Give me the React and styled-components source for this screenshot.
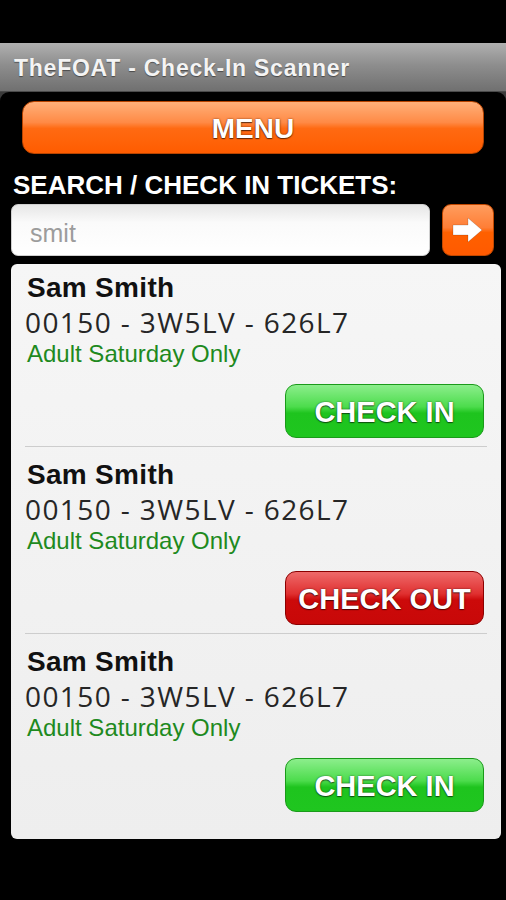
import React from "react";
import styled, { createGlobalStyle, css } from "styled-components";

const Global = createGlobalStyle`
  html, body { margin: 0; padding: 0; background: #000; }
  body { font-family: "Liberation Sans", Arial, sans-serif; }
  * { box-sizing: border-box; }
`;

const Screen = styled.div`
  width: 506px;
  height: 900px;
  background: #000;
  display: flex;
  flex-direction: column;
`;

const StatusSpace = styled.div`
  height: 43px;
  flex: none;
`;

const Frame = styled.div`
  flex: 1;
  display: flex;
  flex-direction: column;
  background: #3a3a3a;
`;

const TitleBar = styled.div`
  height: 49px;
  flex: none;
  display: flex;
  align-items: center;
  padding-left: 14px;
  background: linear-gradient(to bottom, #b0b0b0 0%, #8e8e8e 45%, #707070 100%);
  border-bottom: 1px solid #4a4a4a;
`;

const Title = styled.h1`
  margin: 0;
  font-size: 23px;
  font-weight: bold;
  letter-spacing: 0.75px;
  color: #f4f4f4;
  text-shadow: 0 1px 1px rgba(0, 0, 0, 0.45);
  padding-top: 2px;
`;

const Content = styled.div`
  flex: 1;
  background: #000;
  border-radius: 9px 9px 0 0;
  padding: 9px 5px 0 11px;
  display: flex;
  flex-direction: column;
`;

const glossText = css`
  color: #fff;
  font-weight: bold;
  text-shadow: 0 0 2px rgba(0, 0, 0, 0.6), 0 1px 1px rgba(0, 0, 0, 0.5);
`;

const MenuButton = styled.button`
  margin: 0 17px 0 11px;
  height: 53px;
  border: 1px solid #b84400;
  border-radius: 12px;
  background: linear-gradient(
    to bottom,
    #ffb07a 0%,
    #ff8a45 40%,
    #ff6a12 52%,
    #ff5c00 100%
  );
  font-family: "Liberation Sans", Arial, sans-serif;
  font-size: 28px;
  padding: 2px 0 0;
  ${glossText};
  text-shadow: 0 0 2px rgba(80, 30, 0, 0.8), 0 1px 1px rgba(0, 0, 0, 0.6);
`;

const SearchLabel = styled.div`
  margin: 16px 0 0 2px;
  font-size: 26px;
  line-height: 30px;
  font-weight: bold;
  color: #fff;
`;

const SearchRow = styled.div`
  margin: 4px 7px 0 0;
  display: flex;
  gap: 12px;
  height: 52px;
`;

const SearchInput = styled.div`
  flex: 1;
  border-radius: 7px;
  border: 1px solid #cfcfcf;
  background: linear-gradient(to bottom, #e6e6e6 0%, #fafafa 35%, #ffffff 100%);
  display: flex;
  align-items: center;
  padding: 7px 0 0 18px;
  font-size: 25px;
  color: #9c9c9c;
`;

const GoButton = styled.button`
  width: 52px;
  flex: none;
  border-radius: 9px;
  border: 1px solid #c24800;
  background: linear-gradient(
    to bottom,
    #ff9d5e 0%,
    #ff7e36 45%,
    #ff6000 55%,
    #ff5a00 100%
  );
  display: flex;
  align-items: center;
  justify-content: center;
  padding: 0;
`;

const Panel = styled.div`
  margin-top: 8px;
  background: linear-gradient(to bottom, #f6f6f6 0%, #f1f1f1 60%, #eeeeee 100%);
  border-radius: 6px;
  padding: 0 0 19px;
  display: flex;
  flex-direction: column;
`;

const Item = styled.div`
  padding: ${(p) => (p.$first ? "8px" : "12px")} 3px 8px 2px;
  margin: 0 14px;
  border-top: ${(p) => (p.$first ? "none" : "1px solid #cdcdcd")};
  display: flex;
  flex-direction: column;
`;

const Name = styled.div`
  font-size: 28px;
  line-height: 32px;
  font-weight: bold;
  letter-spacing: 0.3px;
  color: #111;
`;

const Code = styled.div`
  font-family: "Open Sans", "DejaVu Sans", sans-serif;
  font-size: 28px;
  line-height: 36px;
  letter-spacing: 1.4px;
  color: #262626;
  margin-left: -2px;
`;

const TicketType = styled.div`
  font-size: 24px;
  line-height: 28px;
  color: #1e8a1e;
`;

const ActionRow = styled.div`
  display: flex;
  justify-content: flex-end;
  margin-top: 16px;
`;

const ActionButton = styled.button`
  width: 199px;
  height: 54px;
  border-radius: 11px;
  font-family: "Liberation Sans", Arial, sans-serif;
  font-size: 29px;
  padding: 2px 0 0;
  ${glossText};
  ${(p) =>
    p.$variant === "out"
      ? css`
          border: 1px solid #8c0000;
          background: linear-gradient(
            to bottom,
            #ee6a6a 0%,
            #e03030 42%,
            #cc0a0a 54%,
            #c80808 100%
          );
        `
      : css`
          border: 1px solid #1a9a1a;
          background: linear-gradient(
            to bottom,
            #8cee8c 0%,
            #4cdc4c 42%,
            #1ec41e 54%,
            #1fc61f 100%
          );
        `}
`;

const Arrow = () => (
  <svg width="34" height="30" viewBox="0 0 34 30">
    <path
      d="M2 10 H17 V3 L31 15 L17 27 V20 H2 Z"
      fill="#fff"
      stroke="rgba(0,0,0,0.15)"
      strokeWidth="1"
    />
  </svg>
);

const tickets = [
  { name: "Sam Smith", code: "00150 - 3W5LV - 626L7", type: "Adult Saturday Only", action: "in" },
  { name: "Sam Smith", code: "00150 - 3W5LV - 626L7", type: "Adult Saturday Only", action: "out" },
  { name: "Sam Smith", code: "00150 - 3W5LV - 626L7", type: "Adult Saturday Only", action: "in" },
];

export default function App() {
  return (
    <>
      <Global />
      <Screen>
        <StatusSpace />
        <Frame>
          <TitleBar>
            <Title>TheFOAT - Check-In Scanner</Title>
          </TitleBar>
          <Content>
            <MenuButton>MENU</MenuButton>
            <SearchLabel>SEARCH / CHECK IN TICKETS:</SearchLabel>
            <SearchRow>
              <SearchInput>smit</SearchInput>
              <GoButton>
                <Arrow />
              </GoButton>
            </SearchRow>
            <Panel>
              {tickets.map((t, i) => (
                <Item key={i} $first={i === 0}>
                  <Name>{t.name}</Name>
                  <Code>{t.code}</Code>
                  <TicketType>{t.type}</TicketType>
                  <ActionRow>
                    <ActionButton $variant={t.action}>
                      {t.action === "out" ? "CHECK OUT" : "CHECK IN"}
                    </ActionButton>
                  </ActionRow>
                </Item>
              ))}
            </Panel>
          </Content>
        </Frame>
      </Screen>
    </>
  );
}
